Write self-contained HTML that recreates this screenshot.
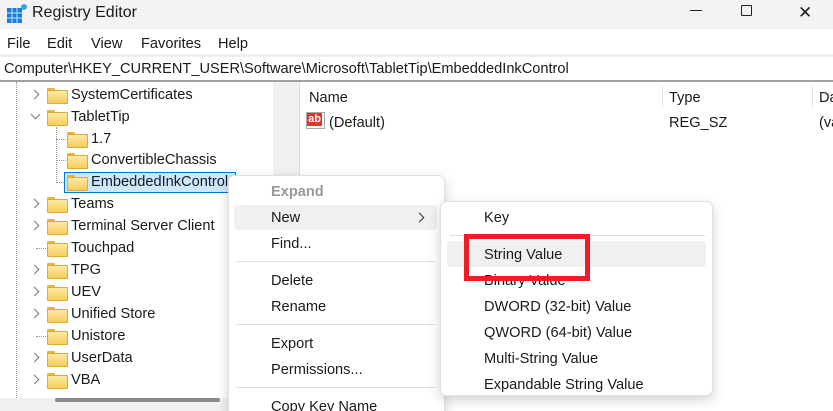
<!DOCTYPE html>
<html><head><meta charset="utf-8"><style>
*{margin:0;padding:0;box-sizing:border-box}
html,body{width:833px;height:411px;overflow:hidden}
body{background:#fff;font-family:"Liberation Sans",sans-serif;font-size:14.6px;line-height:19px;color:#1a1a1a;position:relative}
.abs{position:absolute;white-space:nowrap}
.fold{position:absolute;width:19px;height:14px}
.fold:before{content:"";position:absolute;left:0;top:0;width:8px;height:4px;background:#e8b43a;border-radius:1px 1px 0 0}
.fold:after{content:"";position:absolute;left:0;top:2px;width:19px;height:12px;background:linear-gradient(#fde9a4,#f6cd5b);border:1px solid #e0aa35;border-radius:1px}
.chev{position:absolute;width:7px;height:7px;border-right:1.3px solid #777;border-bottom:1.3px solid #777}
.r{transform:rotate(-45deg)}.d{transform:rotate(45deg)}
.menu{position:absolute;background:#fff;border:1px solid #e0e0e0;border-radius:7px;box-shadow:0 4px 12px rgba(0,0,0,.18)}
.sep{position:absolute;height:1px;background:#e0e0e0}
</style></head><body>
<div class="abs" style="left:0;top:0;width:833px;height:29px;background:#f3f3f3"></div>
<svg class="abs" style="left:6px;top:3px" width="22" height="22" viewBox="0 0 22 22">
<rect x="1" y="5" width="15" height="15" fill="#1a7fd4"/>
<g stroke="#bfe2ff" stroke-width="1"><line x1="6" y1="5" x2="6" y2="20"/><line x1="11" y1="5" x2="11" y2="20"/><line x1="1" y1="10" x2="16" y2="10"/><line x1="1" y1="15" x2="16" y2="15"/></g>
<circle cx="18" cy="4" r="3" fill="#3aa0ea"/></svg>
<div class="abs" style="left:32px;top:3px;font-size:16px;line-height:20px">Registry Editor</div>
<div class="abs" style="left:690px;top:10px;width:12px;height:1px;background:#222"></div>
<div class="abs" style="left:741px;top:5px;width:11px;height:11px;border:1px solid #222;border-radius:1px"></div>
<div class="abs" style="left:798px;top:3px;font-size:17px;color:#222">✕</div>
<div class="abs" style="left:7px;top:35px">File</div>
<div class="abs" style="left:47px;top:35px">Edit</div>
<div class="abs" style="left:91px;top:35px">View</div>
<div class="abs" style="left:141px;top:35px">Favorites</div>
<div class="abs" style="left:218px;top:35px">Help</div>
<div class="abs" style="left:0;top:54px;width:833px;height:3px;background:#f0f0f0"></div>
<div class="abs" style="left:4px;top:60px">Computer\HKEY_CURRENT_USER\Software\Microsoft\TabletTip\EmbeddedInkControl</div>
<div class="abs" style="left:0;top:80px;width:833px;height:2px;background:#a0a0a0"></div>
<div class="abs" style="left:273px;top:82px;width:20px;height:316px;background:#f0f0f0"></div>
<div class="abs" style="left:293px;top:82px;width:7px;height:329px;background:#f0f0f0;border-right:1px solid #ddd"></div>
<div class="abs" style="left:16px;top:82px;height:316px;border-left:1px dotted #999"></div>
<div class="abs" style="left:56px;top:127px;height:56px;border-left:1px dotted #999"></div>
<div class="abs" style="left:56px;top:139px;width:10px;border-top:1px dotted #999"></div>
<div class="abs" style="left:56px;top:160px;width:10px;border-top:1px dotted #999"></div>
<div class="abs" style="left:56px;top:182px;width:10px;border-top:1px dotted #999"></div>
<div class="abs" style="left:36px;top:248px;width:10px;border-top:1px dotted #999"></div>
<div class="abs" style="left:36px;top:336px;width:10px;border-top:1px dotted #999"></div>
<div class="abs" style="left:64px;top:172px;width:172px;height:21px;background:#cce8ff;border:1px solid #0078d4"></div>
<div id="tree"></div>
<div class="abs" style="left:0;top:398px;width:300px;height:13px;background:#f0f0f0"></div>
<div class="abs" style="left:55px;top:398px;width:165px;height:4px;background:#8a8a8a;border-radius:2px"></div>
<div class="abs" style="left:309px;top:89px">Name</div>
<div class="abs" style="left:662px;top:86px;width:1px;height:22px;background:#e5e5e5"></div>
<div class="abs" style="left:669px;top:89px">Type</div>
<div class="abs" style="left:812px;top:86px;width:1px;height:22px;background:#e5e5e5"></div>
<div class="abs" style="left:819px;top:89px">Da</div>
<div class="abs" style="left:306px;top:112px;width:19px;height:17px;border:1px solid #aaa;background:#fff"></div>
<div class="abs" style="left:307px;top:113px;width:15px;height:13px;background:#d9382b;color:#fff;font-size:11px;font-weight:bold;line-height:12px;text-align:center">ab</div>
<div class="abs" style="left:329px;top:114px">(Default)</div>
<div class="abs" style="left:669px;top:114px">REG_SZ</div>
<div class="abs" style="left:819px;top:114px">(va</div>
<div class="menu" style="left:228px;top:175px;width:217px;height:250px"></div>
<div class="abs" style="left:234px;top:205px;width:203px;height:25px;background:#f0f0f0;border-radius:4px"></div>
<div class="abs" style="left:271px;top:183px;color:#999;font-weight:bold">Expand</div>
<div class="abs" style="left:271px;top:209px">New</div>
<div class="chev r" style="left:416px;top:214px;border-color:#333"></div>
<div class="abs" style="left:271px;top:235px">Find...</div>
<div class="sep" style="left:237px;top:261px;width:198px"></div>
<div class="abs" style="left:271px;top:272px">Delete</div>
<div class="abs" style="left:271px;top:298px">Rename</div>
<div class="sep" style="left:237px;top:324px;width:198px"></div>
<div class="abs" style="left:271px;top:335px">Export</div>
<div class="abs" style="left:271px;top:361px">Permissions...</div>
<div class="sep" style="left:237px;top:387px;width:198px"></div>
<div class="abs" style="left:271px;top:398px">Copy Key Name</div>
<div class="menu" style="left:440px;top:201px;width:273px;height:195px"></div>
<div class="abs" style="left:447px;top:241px;width:259px;height:26px;background:#f0f0f0;border-radius:4px"></div>
<div class="abs" style="left:484px;top:209px">Key</div>
<div class="sep" style="left:450px;top:235px;width:255px"></div>
<div class="abs" style="left:484px;top:246px">String Value</div>
<div class="abs" style="left:484px;top:272px">Binary Value</div>
<div class="abs" style="left:484px;top:298px">DWORD (32-bit) Value</div>
<div class="abs" style="left:484px;top:324px">QWORD (64-bit) Value</div>
<div class="abs" style="left:484px;top:350px">Multi-String Value</div>
<div class="abs" style="left:484px;top:376px">Expandable String Value</div>
<div class="abs" style="left:464px;top:234px;width:126px;height:47px;border:5px solid #ee1c24"></div>
<script>
var rows=[["SystemCertificates",95,0,"r"],["TabletTip",117,0,"d"],["1.7",139,1,""],["ConvertibleChassis",160,1,""],["EmbeddedInkControl",182,1,""],["Teams",204,0,"r"],["Terminal Server Client",226,0,"r"],["Touchpad",248,0,""],["TPG",270,0,"r"],["UEV",292,0,"r"],["Unified Store",314,0,"r"],["Unistore",336,0,""],["UserData",358,0,"r"],["VBA",380,0,"r"]];
var h="";rows.forEach(function(r){var x=r[2]?67:47,y=r[1];
if(r[3]=="r")h+='<div class="chev r" style="left:31px;top:'+(y-4)+'px"></div>';
if(r[3]=="d")h+='<div class="chev d" style="left:32px;top:'+(y-6)+'px"></div>';
h+='<div class="fold" style="left:'+x+'px;top:'+(y-7)+'px"></div>';
h+='<div class="abs" style="left:'+(x+24)+'px;top:'+(y-9)+'px">'+r[0]+'</div>';});
document.getElementById("tree").innerHTML=h;
</script>
</body></html>
